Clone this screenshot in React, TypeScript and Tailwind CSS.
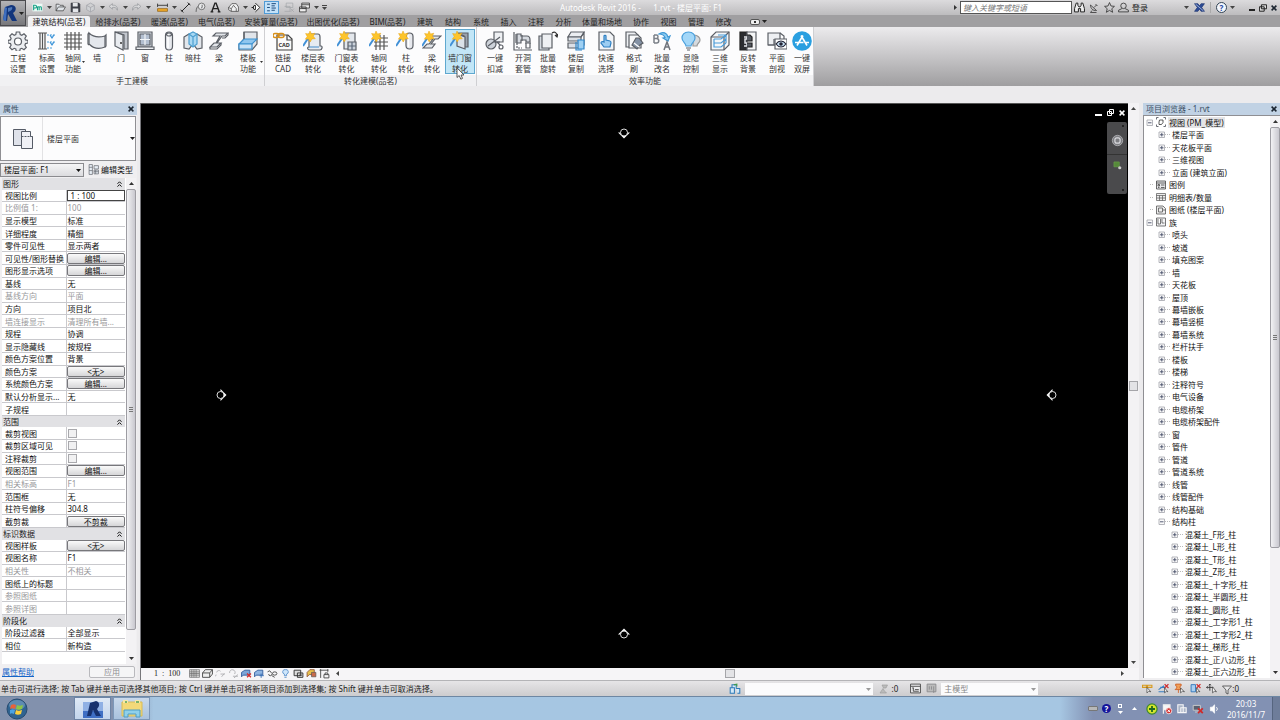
import { useState } from "react";
import type { ReactNode } from "react";
import { clsx } from "clsx";

/* ---------- shared bits ---------- */

function Svg({ size = 20, children }: { size?: number; children: ReactNode }) {
  return (
    <svg
      width={size}
      height={size}
      viewBox="0 0 20 20"
      fill="none"
      stroke="#5b5f66"
      strokeWidth="1.2"
      className="shrink-0"
      aria-hidden="true"
    >
      {children}
    </svg>
  );
}

function Caret({ className = "fill-[#444]" }: { className?: string }) {
  return (
    <svg width="5" height="3" viewBox="0 0 5 3" className={clsx("shrink-0", className)} aria-hidden="true">
      <path d="M0 0h5L2.5 3z" />
    </svg>
  );
}

function Cross({ className = "stroke-[#1b2530]" }: { className?: string }) {
  return (
    <svg width="6" height="6" viewBox="0 0 6 6" strokeWidth="1.5" className={className} aria-hidden="true">
      <path d="M.6.6l4.8 4.8M5.4.6L.6 5.4" />
    </svg>
  );
}

/* yellow star with a blue handle, the "convert" wand */
function Wand() {
  return (
    <g stroke="none">
      <path d="M6 6L0 15" stroke="#3f8fd6" strokeWidth="2" />
      <path
        d="M7 0l1.5 3 3.3-.8-1.5 3 2 2.6-3.3.1L7.200 11 5.600 8l-3.300.2 1.900-2.800L2.600 2.500l3.200.5z"
        fill="#fdc52c"
        stroke="#e9a416"
        strokeWidth=".5"
      />
    </g>
  );
}

/* ---------- ribbon icons ---------- */

const icons: Record<string, ReactNode> = {
  gear: (
    <>
      <path
        d="M8.300 1h3.400l.5 2.500 1.600.7 2.200-1.400 2.300 2.300-1.400 2.200.6 1.600 2.500.5v2.600l-2.500.6-.6 1.600 1.400 2.200-2.300 2.300-2.200-1.400-1.600.6-.5 2.500H8.300l-.5-2.500-1.600-.6L4 18.700l-2.300-2.300 1.400-2.200-.6-1.600L0 12V9.400l2.500-.5.6-1.600-1.400-2.200L4 2.800l2.200 1.400 1.600-.7z"
        fill="#eceef1"
      />
      <circle cx="10" cy="10.500" r="3.500" fill="#fff" />
    </>
  ),
  level: (
    <>
      <path d="M1 2h9M1 18h9M3 2v16M5.500 2v16M8 2v16" stroke="#555" />
      <path d="M10 4h9M10 11h9M10 17h6" stroke="#4b9bd8" strokeDasharray="2 1" />
      <path d="M13 4l2 3 2-3M13 11l2 3 2-3" stroke="#3a92d8" fill="#bfe0f7" />
    </>
  ),
  grid: <path d="M4 1v18M8 1v18M12 1v18M16 1v18M1 4h18M1 8h18M1 12h18M1 16h18" stroke="#555" />,
  wall: (
    <>
      <path d="M2 2c4 4 9 5 16 3v11c-7 3-12 1-16-3z" fill="#e4e7ec" />
      <path d="M2 2L1 3v10l1 1M18 5l1-1v11l-1 1" />
    </>
  ),
  door: (
    <>
      <path d="M4 1h13v17h-4V4L4 1z" fill="#c2c6cd" />
      <path d="M4 1l8 3v15l-8-4z" fill="#e9ecf0" />
      <path d="M10 11v2" stroke="#333" strokeWidth="1.500" />
    </>
  ),
  window: (
    <>
      <path d="M3 1h14v15H3z" fill="#dfe4eb" />
      <path d="M5 3h10v11H5z" fill="#b3bfd0" />
      <path d="M10 3v11M5 8.500h10" stroke="#f2f5f8" />
      <path d="M1 16h18v2.500H1z" fill="#eceef1" />
    </>
  ),
  column: (
    <>
      <rect x="6.500" y="1" width="7" height="18" rx="3.500" fill="#e7e9ee" />
      <path d="M9 3v14" stroke="#fff" strokeWidth="1.500" />
      <ellipse cx="10" cy="3.500" rx="2.500" ry="1.500" />
    </>
  ),
  hiddenColumn: (
    <>
      <path d="M1 6l5-3 4 3 4-3 5 3v11l-5 1-4-5-4 5-5-1z" fill="#e2e6eb" />
      <path d="M6 3l4-2 4 2v10l-4 3-4-3z" fill="#a9d8f3" stroke="#4d9fd0" />
      <path d="M10 6v10M6 3l4 3 4-3" stroke="#4d9fd0" />
    </>
  ),
  beam: (
    <>
      <path d="M7 2h12l-3 3h-3l-5 7h4l-4 4H1l4-4h2l4-7H4z" fill="#e3e6ea" />
      <path d="M1 16v2h7l4-4v-2M19 2v2l-3 3h-3" />
    </>
  ),
  floor: (
    <>
      <path d="M6 1h13v12l-5 6H1v-5l5-6z" fill="#e1e5ea" />
      <path d="M1 13l5-5h13l-5 5z" fill="#8fc6ef" stroke="#3d91cf" />
      <path d="M1 13h13v5H1z" fill="#c8e2f6" stroke="#3d91cf" />
      <path d="M6 1v7" />
    </>
  ),
  cad: (
    <>
      <path d="M4 4h11l4 4v11H4z" fill="#fafafa" stroke="#444" />
      <path d="M14 4v5h5" stroke="#444" />
      <rect x="0" y="2.500" width="6" height="4" rx="2" stroke="#d8901a" strokeWidth="1.500" />
      <rect x="5" y="2.500" width="6" height="4" rx="2" stroke="#d8901a" strokeWidth="1.500" />
      <text x="5.500" y="15.500" fontSize="5.500" fontWeight="700" fill="#333" stroke="none">
        CAD
      </text>
    </>
  ),
  sheetWand: (
    <>
      <path d="M6 3h9c2 0 2 2 2 3v9h1c2 0 1 4-1 4H7c-3 0-3-3-1-3z" fill="#e6ebf1" />
      <path d="M6 16h10" stroke="#5d9bd1" />
      <Wand />
    </>
  ),
  doorWand: (
    <>
      <path d="M7 2h11v16H7z" fill="#e3e7ec" />
      <path d="M11 11h8v8h-8z" fill="#cbd2db" />
      <path d="M15 11v8M11 15h8" stroke="#5e6a7b" />
      <Wand />
    </>
  ),
  gridWand: (
    <>
      <path d="M7 4v15M11 4v15M15 4v15M5 7h14M5 11h14M5 15h14" stroke="#555" />
      <Wand />
    </>
  ),
  columnWand: (
    <>
      <rect x="10" y="2" width="7" height="16" rx="3.500" fill="#e7e9ee" />
      <path d="M12.500 4v12" stroke="#fff" strokeWidth="1.500" />
      <Wand />
    </>
  ),
  beamWand: (
    <>
      <path d="M8 5h11l-3 3h-3l-4 5h4l-3 4H1l4-4h2l4-5H7z" fill="#e3e6ea" />
      <Wand />
    </>
  ),
  wallWand: (
    <>
      <path d="M7 2h11v14h-4V5z" fill="#9ba3ad" />
      <path d="M7 3l8 3v12l-8-3z" fill="#dbe2e8" />
      <Wand />
    </>
  ),
  cut: (
    <>
      <path d="M9 1h9v10H9z" fill="#eef0f3" />
      <circle cx="6" cy="13" r="5" fill="#cdd2d9" />
      <path d="M3 15l12-9M15 11H8M12 11l4 4" />
      <circle cx="16" cy="16" r="2" fill="#fff" />
    </>
  ),
  sleeve: (
    <>
      <path d="M1 1v18h18" />
      <path d="M4 3h4v2h6c2 0 3 2 3 4v2h-4V9H8v3H4z" fill="#d6dae0" />
      <path d="M12 12h6M13 12v5h4v-5M3 3v9M9 4v6" />
      <path d="M4 12v5h5" strokeDasharray="2 1" />
    </>
  ),
  rotate: (
    <>
      <path d="M1 5h10v14H1z" fill="#d5dae0" />
      <path d="M4 3h10v14H4z" fill="#eef0f3" />
      <path d="M14 2c3-2 5 0 5 3M17 4l2 2 1-3" stroke="#333" />
    </>
  ),
  copyFloor: (
    <>
      <path d="M5 1h13l-3 5H2z" fill="#eceef2" />
      <path d="M2 6h13v4H2zM2 12h13v5H2z" fill="#dce0e6" />
      <path d="M15 6l3-4v12l-3 3" />
      <path d="M12 9h6v9h-6z" fill="#9fd0f3" stroke="#2f85c9" />
      <path d="M10 11v8h6" stroke="#2f85c9" />
    </>
  ),
  hand: (
    <>
      <path d="M3 1h11l4 4v14H3z" fill="#f2f4f7" />
      <path
        d="M8 5c0-1 2-1 2 0v4l4 1c1 0 1 1 1 2l-1 4H8l-3-4c0-1 1-2 3-1z"
        fill="#9ccdf2"
        stroke="#2d7fc2"
      />
    </>
  ),
  brush: (
    <>
      <path d="M2 1h9l3 3v12H2z" fill="#eef0f3" />
      <path d="M5 4h9l3 3v10H5z" fill="#f9fafb" />
      <path d="M12 7h3l4 5-3 2-3 4-5-4z" fill="#8492a5" />
      <path d="M10 12l5 4" stroke="#fff" />
    </>
  ),
  rename: (
    <>
      <path d="M2 4v8M2 4h2.500c2 0 2 3.500 0 3.500H2M4.500 7.500c3 0 3 4.500 0 4.500H2" stroke="#7b8088" strokeWidth="1.500" />
      <path d="M7 3c4-3 8-1 9 3l2-1-2 5-5-3 2-.5C12 4 10 3 7 3z" fill="#8fcdf3" stroke="#3f97d4" />
      <path d="M12 19l3-8 3 8M13 16h4" stroke="#6f747c" strokeWidth="1.500" />
    </>
  ),
  bulb: (
    <>
      <path d="M13 4c4 0 6 3 6 5 0 3-3 3-3 6h-4V4z" fill="#d6dade" stroke="#999" />
      <path d="M7.500 1C3 1 1 4 1 7c0 4 4 5 4 8h5c0-3 4-4 4-8 0-3-2-6-6.500-6z" fill="#a3d7f8" stroke="#4ba0dc" />
      <path d="M5 17h5M6 19h3" />
    </>
  ),
  cube: (
    <>
      <path d="M6 1h13v13l-5 5H1V6z" fill="#f4f6f8" />
      <path d="M1 6h13v13M14 6l5-5" />
      <path d="M4 8h7l5-4M4 8v8h7l5-4M4 12h7l5-4M8 4h8v8" fill="none" stroke="#4b9cd8" />
    </>
  ),
  invert: (
    <>
      <path d="M2 1h7v18H2z" fill="#2b2d31" stroke="#222" />
      <path d="M9 1h9v18H9z" fill="#f5f6f7" />
      <path d="M6 6h3v2H7v4h2v3H6" stroke="#e2e4e8" strokeWidth="1.500" />
      <path d="M9 4h3l2 2v4h-5M9 12h5v4H9" fill="#555a62" stroke="#222" />
    </>
  ),
  section: (
    <>
      <path d="M1 2h12v12H1z" fill="#eef0f3" />
      <path d="M1 14h6V8M13 2l4 3v4" />
      <path d="M8 8h12v10H8z" fill="#fff" />
      <path d="M9 13c3-4 7-4 10 0-3 4-7 4-10 0z" fill="#c7e0f2" stroke="#223" />
      <circle cx="14" cy="13" r="1.800" fill="#223" stroke="none" />
    </>
  ),
  store: (
    <>
      <circle cx="10" cy="10" r="9.800" fill="#2a9fe0" stroke="none" />
      <path d="M5 14.500L11 4.500M15 14.500L9 4.500M3 11.500h8.500M14 11.500h3" stroke="#fff" strokeWidth="1.600" />
    </>
  ),
};

/* ---------- quick access bar ---------- */

const quick: { label: string; art?: ReactNode; on?: boolean; gap?: boolean }[] = [
  {
    label: "PM",
    art: (
      <>
        <path d="M1 3h18v14H1z" fill="#eefaf6" stroke="none" />
        <path d="M3 15V6h3c3 0 3 5 0 5H3M10 15V8M10 10c0-2 3-2 3 0v5M13 10c0-2 4-2 4 0v5" stroke="#16a085" strokeWidth="2" />
      </>
    ),
  },
  { label: "" },
  { label: "打开", art: <path d="M2 16V4h5l2 2h6v3M2 16l4-7h13l-4 7z" fill="#dfe3e8" stroke="#333" /> },
  {
    label: "保存",
    art: (
      <>
        <path d="M2 2h14l2 2v14H2z" fill="#3d4048" stroke="#33363c" />
        <path d="M5 2h9v6H5zM5 12h10v6H5z" fill="#e5e7ea" stroke="none" />
      </>
    ),
  },
  { label: "同步", art: <path d="M3 6l7-4 7 4v8l-7 4-7-4zM3 6l7 4 7-4M10 10v8" stroke="#9b9ea3" fill="#cfd1d4" /> },
  { label: "" },
  { label: "放弃", art: <path d="M8 3L2 8l6 5v-3c4-1 7 0 9 5 1-6-3-10-9-9z" stroke="#8f9297" fill="#d8d8da" /> },
  { label: "" },
  { label: "重做", art: <path d="M12 3l6 5-6 5v-3c-4-1-7 0-9 5-1-6 3-10 9-9z" stroke="#8f9297" fill="#d8d8da" /> },
  { label: "" },
  {
    label: "测量",
    gap: true,
    art: (
      <>
        <path d="M1 12h18v5H1z" fill="#efa929" stroke="#8a5a10" />
        <path d="M1 6h18M1 3v6M19 3v6" stroke="#333" strokeWidth="1.600" />
      </>
    ),
  },
  { label: "" },
  {
    label: "对齐标注",
    art: (
      <>
        <path d="M3 17L17 3" stroke="#222" strokeWidth="1.800" />
        <path d="M1 14l5 5M14 1l5 5" stroke="#222" strokeWidth="1.800" />
      </>
    ),
  },
  {
    label: "标记",
    art: (
      <>
        <path d="M2 18c0-6 2-10 5-11" stroke="#333" />
        <circle cx="12" cy="8" r="6" fill="#e8e9eb" stroke="#444" />
        <path d="M11 11l2-1V5" stroke="#333" />
      </>
    ),
  },
  { label: "文字", art: <path d="M3 18L9 2h2l6 16M6 12h8M1 18h5M14 18h5" stroke="#222" strokeWidth="2.600" /> },
  {
    label: "三维视图",
    gap: true,
    art: (
      <>
        <path d="M1 10l6-7h8l4 6v8H6l-5-3z" fill="#f1f1f2" stroke="#333" />
        <path d="M1 10l5 2 4-6 5 6v5M6 12v5" stroke="#333" />
      </>
    ),
  },
  { label: "" },
  { label: "剖面", art: <path d="M1 10h4M8 2l8 8-8 8M8 6a4 4 0 100 8z" fill="#fff" stroke="#222" strokeWidth="1.800" /> },
  {
    label: "细线",
    on: true,
    art: <path d="M2 4h5M2 10h5M2 16h5M10 3h8M10 7h6M10 11h8M10 15h6" stroke="#1e4c7c" strokeWidth="1.800" />,
  },
  {
    label: "关闭隐藏窗口",
    gap: true,
    art: <path d="M4 2h12v8H4zM1 8h10v9H1M12 12l6 6M18 12l-6 6" stroke="#a1a3a7" fill="none" />,
  },
  { label: "切换窗口", art: <path d="M5 2h14v9H5zM5 5h14M1 9h12v9H1zM1 12h12" stroke="#333" fill="#eee" strokeWidth="1.500" /> },
  { label: "" },
];

function QuickAccess() {
  return (
    <div className="flex h-full items-center">
      {quick.map((q, i) =>
        q.art ? (
          <button
            key={i}
            title={q.label}
            className={clsx(
              "flex h-[13px] w-[15px] items-center justify-center",
              q.gap && "ml-[3px]",
              q.on && "border border-[#4f9bd6] bg-[#c3e1f8]"
            )}
          >
            <Svg size={11}>{q.art}</Svg>
          </button>
        ) : (
          <button key={i} aria-label="更多" className="flex w-2 justify-center">
            <Caret />
          </button>
        )
      )}
      <button aria-label="自定义快速访问工具栏" className="flex w-2 flex-col items-center gap-px">
        <span className="h-px w-[5px] bg-[#444]" />
        <Caret />
      </button>
    </div>
  );
}

function TitleBar() {
  return (
    <header className="flex h-[15px] shrink-0 items-center bg-linear-to-b from-[#dcdbdd] to-[#bdbcbe] pl-[30px]">
      <QuickAccess />
      <h1 className="flex-1 text-center whitespace-pre text-white">
        {"Autodesk Revit 2016 -      1.rvt - 楼层平面: F1"}
      </h1>
      <div className="flex h-full items-center">
        <svg width="3" height="5" viewBox="0 0 3 5" aria-hidden="true">
          <path d="M0 0l3 2.500L0 5z" fill="#333" />
        </svg>
        <input
          aria-label="搜索"
          placeholder="键入关键字或短语"
          className="ml-[3px] h-[13px] w-[112px] border border-[#555] bg-white px-[2px] leading-[11px] italic placeholder:text-[#777]"
        />
        <div className="flex items-center gap-[3px] pl-px">
          <button aria-label="查找" className="flex w-3 justify-center">
            <Svg size={11}>
              <path d="M4 2h3v4l2 3h2l2-3V2h3l3 10v6h-7v-6H8v6H1v-6z" fill="#eee" stroke="#222" strokeWidth="1.800" />
            </Svg>
          </button>
          <button aria-label="通讯中心" className="flex w-3 justify-center">
            <Svg size={10}>
              <path d="M3 4c0 7 5 12 12 11zM6 15l-3 4h12M10 9l5-5M13 2l4 4" stroke="#333" strokeWidth="1.600" />
            </Svg>
          </button>
          <button aria-label="收藏夹" className="flex w-3 justify-center">
            <Svg size={11}>
              <path d="M10 1l2.700 6.300 6.300.6-4.800 4.300 1.500 6.500L10 15.300l-5.700 3.400 1.500-6.500L1 7.900l6.300-.6z" stroke="#333" strokeWidth="1.500" />
            </Svg>
          </button>
          <button className="flex items-center gap-[3px] text-[#222]">
            <Svg size={11}>
              <circle cx="10" cy="7" r="5" stroke="#333" strokeWidth="1.500" />
              <path d="M7 12l-6 3v3h18v-3l-6-3" stroke="#333" strokeWidth="1.500" />
            </Svg>
            登录
          </button>
        </div>
        <button aria-label="账户菜单" className="ml-[36px]">
          <Caret />
        </button>
        <button aria-label="Exchange Apps" className="ml-[5px]">
          <Svg size={11}>
            <path d="M1 3h6l3 4 3-4h6l-5 7 5 7h-6l-3-4-3 4H1l5-7z" fill="#2d4b94" stroke="#1f3673" />
            <path d="M3 4l14 12" stroke="#cfdcf4" />
          </Svg>
        </button>
        <span className="mx-[5px] h-[11px] w-px bg-[#aaa]" />
        <button aria-label="帮助" className="flex size-[11px] items-center justify-center rounded-full border border-[#345] bg-[#f3f7fd] font-bold text-[#2447a0]">
          ?
        </button>
        <button aria-label="帮助菜单" className="ml-[3px]">
          <Caret />
        </button>
        <div className="ml-[14px] flex items-center gap-[4px] pr-[3px]">
          <button aria-label="最小化" className="h-[7px] w-[6px] border-b-2 border-[#222]" />
          <button aria-label="还原">
            <Svg size={8}>
              <path d="M6 2h13v10H6zM1 7h12v11H1z" fill="#ddd" stroke="#222" strokeWidth="2.500" />
            </Svg>
          </button>
          <button aria-label="关闭">
            <Cross />
          </button>
        </div>
      </div>
    </header>
  );
}

/* ---------- ribbon ---------- */

const tabs: [string, string][] = [
  ["建筑结构(品茗)", "w-[62px]"],
  ["给排水(品茗)", "w-[56px]"],
  ["暖通(品茗)", "w-[47px]"],
  ["电气(品茗)", "w-[47px]"],
  ["安装算量(品茗)", "w-[62px]"],
  ["出图优化(品茗)", "w-[62px]"],
  ["BIM(品茗)", "w-[47px]"],
  ["建筑", "w-[28px]"],
  ["结构", "w-[28px]"],
  ["系统", "w-[28px]"],
  ["插入", "w-[27px]"],
  ["注释", "w-[28px]"],
  ["分析", "w-[27px]"],
  ["体量和场地", "w-[50px]"],
  ["协作", "w-[28px]"],
  ["视图", "w-[27px]"],
  ["管理", "w-[28px]"],
  ["修改", "w-[27px]"],
];

type Tool = { icon: string; lines: string[]; w: string; more?: boolean; hot?: boolean };

const panels: { title: string; tools: Tool[] }[] = [
  {
    title: "手工建模",
    tools: [
      { icon: "gear", lines: ["工程", "设置"], w: "w-[30px]" },
      { icon: "level", lines: ["标高", "设置"], w: "w-[28px]" },
      { icon: "grid", lines: ["轴网", "功能"], w: "w-[24px]", more: true },
      { icon: "wall", lines: ["墙"], w: "w-[24px]" },
      { icon: "door", lines: ["门"], w: "w-[24px]" },
      { icon: "window", lines: ["窗"], w: "w-[24px]" },
      { icon: "column", lines: ["柱"], w: "w-[24px]" },
      { icon: "hiddenColumn", lines: ["暗柱"], w: "w-[24px]" },
      { icon: "beam", lines: ["梁"], w: "w-[28px]" },
      { icon: "floor", lines: ["楼板", "功能"], w: "w-[30px]", more: true },
    ],
  },
  {
    title: "转化建模(品茗)",
    tools: [
      { icon: "cad", lines: ["链接", "CAD"], w: "w-[30px]" },
      { icon: "sheetWand", lines: ["楼层表", "转化"], w: "w-[30px]" },
      { icon: "doorWand", lines: ["门窗表", "转化"], w: "w-[37px]" },
      { icon: "gridWand", lines: ["轴网", "转化"], w: "w-[28px]" },
      { icon: "columnWand", lines: ["柱", "转化"], w: "w-[26px]" },
      { icon: "beamWand", lines: ["梁", "转化"], w: "w-[26px]" },
      { icon: "wallWand", lines: ["墙门窗", "转化"], w: "w-[30px]", hot: true },
    ],
  },
  {
    title: "效率功能",
    tools: [
      { icon: "cut", lines: ["一键", "扣减"], w: "w-[30px]" },
      { icon: "sleeve", lines: ["开洞", "套管"], w: "w-[26px]" },
      { icon: "rotate", lines: ["批量", "旋转"], w: "w-[24px]" },
      { icon: "copyFloor", lines: ["楼层", "复制"], w: "w-[32px]" },
      { icon: "hand", lines: ["快速", "选择"], w: "w-[28px]" },
      { icon: "brush", lines: ["格式", "刷"], w: "w-[28px]" },
      { icon: "rename", lines: ["批量", "改名"], w: "w-[28px]" },
      { icon: "bulb", lines: ["显隐", "控制"], w: "w-[30px]" },
      { icon: "cube", lines: ["三维", "显示"], w: "w-[28px]" },
      { icon: "invert", lines: ["反转", "背景"], w: "w-[28px]" },
      { icon: "section", lines: ["平面", "剖视"], w: "w-[30px]" },
      { icon: "store", lines: ["一键", "双屏"], w: "w-[20px]" },
    ],
  },
];

function ToolButton({ tool }: { tool: Tool }) {
  return (
    <button
      className={clsx(
        "relative flex h-[45px] flex-col items-center border pt-px leading-[11px] text-[#333] hover:border-[#5fa8cf] hover:bg-[#c2e6f7]",
        tool.w,
        tool.hot ? "border-[#5fa8cf] bg-[#c2e6f7]" : "border-transparent"
      )}
    >
      <Svg>{icons[tool.icon]}</Svg>
      <span className="mt-[1px] whitespace-nowrap">{tool.lines[0]}</span>
      <span className="whitespace-nowrap">{tool.lines[1]}</span>
      {tool.more && (
        <span className="absolute right-[-1px] bottom-[10px]">
          <svg width="3" height="2" viewBox="0 0 3 2" aria-hidden="true">
            <path d="M0 0h3L1.500 2z" fill="#333" />
          </svg>
        </span>
      )}
      {tool.hot && (
        <svg width="9" height="13" viewBox="0 0 9 13" className="absolute top-[37px] left-[10px] z-10" aria-hidden="true">
          <path d="M1 .8v9.700l2.200-2 1.600 3.700 1.700-.8L5 8h3z" fill="#fff" stroke="#333" strokeWidth=".8" />
        </svg>
      )}
    </button>
  );
}

function Ribbon() {
  const [active, setActive] = useState(0);
  return (
    <>
      <nav className="flex h-3 shrink-0 items-end bg-[#a09fa1] pl-[28px]">
        {tabs.map(([name, w], i) => (
          <button
            key={name}
            onClick={() => setActive(i)}
            className={clsx(
              "h-[11px] text-center leading-[11px] whitespace-nowrap text-[#222]",
              w,
              i === active && "rounded-t-[2px] bg-[#f1f1f3]"
            )}
          >
            {name}
          </button>
        ))}
        <button aria-label="最小化功能区" className="ml-[13px] flex h-[11px] items-center gap-[2px]">
          <span className="flex h-[6px] w-[10px] items-center justify-center rounded-[2px] border border-[#555] bg-[#eee]">
            <span className="size-[2px] bg-[#333]" />
          </span>
          <Caret className="fill-[#222]" />
        </button>
      </nav>
      <section className="flex h-[59px] shrink-0 bg-linear-to-b from-[#ecebed] via-[#c6c5c7] to-[#9f9ea0]">
        {panels.map((p) => (
          <div key={p.title} className="flex flex-col border-r border-[#cfcfd2] bg-[#fcfcfd]">
            <div className="flex h-[48px] items-start pt-[2px] pr-px pl-[3px]">
              {p.tools.map((t) => (
                <ToolButton key={t.icon} tool={t} />
              ))}
            </div>
            <h2 className="flex-1 bg-[#f1f1f3] text-center leading-[11px] text-[#333]">{p.title}</h2>
          </div>
        ))}
      </section>
    </>
  );
}

/* ---------- properties palette ---------- */

type Row =
  | { kind: "head"; name: string }
  | { kind: "text" | "dim" | "button" | "check" | "input"; name: string; value?: string };

const rows: Row[] = [
  { kind: "head", name: "图形" },
  { kind: "input", name: "视图比例", value: "1 : 100" },
  { kind: "dim", name: "比例值 1:", value: "100" },
  { kind: "text", name: "显示模型", value: "标准" },
  { kind: "text", name: "详细程度", value: "精细" },
  { kind: "text", name: "零件可见性", value: "显示两者" },
  { kind: "button", name: "可见性/图形替换", value: "编辑..." },
  { kind: "button", name: "图形显示选项", value: "编辑..." },
  { kind: "text", name: "基线", value: "无" },
  { kind: "dim", name: "基线方向", value: "平面" },
  { kind: "text", name: "方向", value: "项目北" },
  { kind: "dim", name: "墙连接显示", value: "清理所有墙..." },
  { kind: "text", name: "规程", value: "协调" },
  { kind: "text", name: "显示隐藏线", value: "按规程" },
  { kind: "text", name: "颜色方案位置", value: "背景" },
  { kind: "button", name: "颜色方案", value: "<无>" },
  { kind: "button", name: "系统颜色方案", value: "编辑..." },
  { kind: "text", name: "默认分析显示...", value: "无" },
  { kind: "text", name: "子规程" },
  { kind: "head", name: "范围" },
  { kind: "check", name: "裁剪视图" },
  { kind: "check", name: "裁剪区域可见" },
  { kind: "check", name: "注释裁剪" },
  { kind: "button", name: "视图范围", value: "编辑..." },
  { kind: "dim", name: "相关标高", value: "F1" },
  { kind: "text", name: "范围框", value: "无" },
  { kind: "text", name: "柱符号偏移", value: "304.8" },
  { kind: "button", name: "截剪裁", value: "不剪裁" },
  { kind: "head", name: "标识数据" },
  { kind: "button", name: "视图样板", value: "<无>" },
  { kind: "text", name: "视图名称", value: "F1" },
  { kind: "dim", name: "相关性", value: "不相关" },
  { kind: "text", name: "图纸上的标题" },
  { kind: "dim", name: "参照图纸" },
  { kind: "dim", name: "参照详图" },
  { kind: "head", name: "阶段化" },
  { kind: "text", name: "阶段过滤器", value: "全部显示" },
  { kind: "text", name: "相位", value: "新构造" },
];

function RowValue({ row }: { row: Row }) {
  if (row.kind === "head") return null;
  if (row.kind === "button")
    return (
      <button
        aria-label={`${row.name} ${row.value}`}
        className="block h-[11px] w-full rounded-[2px] border border-[#77777b] bg-linear-to-b from-[#fafafa] to-[#d6d6d8] text-center leading-[9px] text-[#111]"
      >
        {row.value}
      </button>
    );
  if (row.kind === "check")
    return (
      <input
        type="checkbox"
        aria-label={row.name}
        className="ml-px block size-[9px] appearance-none border border-[#a9a9ad] bg-[#f1f1f2] checked:bg-[#4b8bd0]"
      />
    );
  if (row.kind === "input")
    return (
      <input
        aria-label={row.name}
        defaultValue={row.value}
        className="block h-[11px] w-full border border-[#444] bg-white px-[3px] leading-[9px]"
      />
    );
  return <span className="pl-px">{row.value}</span>;
}

function VScroll({ thumb, grip }: { thumb: string; grip?: boolean }) {
  return (
    <div className="flex w-[10px] shrink-0 flex-col items-center bg-[#f3f2f4]">
      <div className="flex h-[11px] shrink-0 items-center">
        <Caret className="rotate-180 fill-[#333]" />
      </div>
      <div className="min-h-0 w-full flex-1">
        <div
          className={clsx(
            "flex w-full flex-col items-center justify-center gap-px rounded-[2px] border border-[#9d9ca2] bg-linear-to-r from-[#f2f2f4] to-[#c9c8cf]",
            thumb
          )}
        >
          {grip && (
            <>
              <span className="h-px w-1 bg-[#777]" />
              <span className="h-px w-1 bg-[#777]" />
              <span className="h-px w-1 bg-[#777]" />
            </>
          )}
        </div>
      </div>
      <div className="flex h-[11px] shrink-0 items-center">
        <Caret className="fill-[#333]" />
      </div>
    </div>
  );
}

function PaletteTitle({ children }: { children: ReactNode }) {
  return (
    <div className="flex h-3 shrink-0 items-center justify-between bg-[#c1d2e4] px-[3px] text-[#3c5064]">
      <h2>{children}</h2>
      <button aria-label="关闭面板">
        <Cross />
      </button>
    </div>
  );
}

function Properties() {
  return (
    <aside className="flex w-[137px] shrink-0 flex-col bg-[#f0eff1]">
      <PaletteTitle>属性</PaletteTitle>
      <button className="mt-px mr-px flex h-[45px] shrink-0 items-center border border-[#8f8f93] bg-[#fcfcfd] text-[#333]">
        <span className="flex h-full w-[42px] items-center justify-center border-r border-[#e2e2e4] pl-[3px]">
          <svg width="20" height="20" viewBox="0 0 20 20" fill="#dfe2ea" stroke="#555b66" aria-hidden="true">
            <path d="M.5.5h12v16H.5z" />
            <path d="M8.500 2.500h9v5h2v12h-11z" fill="#f0f1f6" />
            <path d="M8.500 7.500h11" strokeDasharray="2 1" />
          </svg>
        </span>
        <span className="flex-1 pl-[4px] text-left">楼层平面</span>
        <Caret className="fill-[#222]" />
      </button>
      <div className="flex h-[17px] shrink-0 items-center gap-[4px]">
        <div className="relative w-[84px]">
          <select
            aria-label="实例筛选"
            className="block h-[14px] w-full appearance-none border border-[#8b8b8f] bg-linear-to-b from-[#f5f5f6] to-[#dcdcdf] px-[3px] leading-3 text-[#111]"
          >
            <option>楼层平面: F1</option>
          </select>
          <span className="pointer-events-none absolute top-[6px] right-[3px]">
            <Caret className="fill-[#111]" />
          </span>
        </div>
        <button className="flex items-center gap-[2px] whitespace-nowrap text-[#111]">
          <Svg size={11}>
            <path d="M2 1h6v18H2zM2 6h6M2 12h6M11 3h8v6h-8zM11 11h8v7h-8zM14 11v7M11 14h8" fill="#e8eef5" />
          </Svg>
          编辑类型
        </button>
      </div>
      <div className="flex min-h-0 flex-1 pr-px pl-[2px]">
        <div className="min-h-0 flex-1 bg-white pr-px pb-3">
          <table className="h-full w-full table-fixed border-collapse leading-[11px]">
            <colgroup>
              <col className="w-[64px]" />
              <col />
            </colgroup>
            <tbody>
              {rows.map((row) =>
                row.kind === "head" ? (
                  <tr key={row.name} className="bg-[#e1e1e4]">
                    <th colSpan={2} className="p-0 text-left font-normal text-[#222]">
                      <button className="flex w-full items-center justify-between pr-[3px] pl-px leading-[11px]">
                        {row.name}
                        <svg width="5" height="6" viewBox="0 0 5 6" fill="none" stroke="#111" aria-hidden="true">
                          <path d="M.5 2.800L2.500.8l2 2M.5 5.600l2-2 2 2" />
                        </svg>
                      </button>
                    </th>
                  </tr>
                ) : (
                  <tr key={row.name} className={clsx("border-b border-[#c9c9cd]", row.kind === "dim" ? "text-[#98989b]" : "text-[#111]")}>
                    <td className="border-r border-[#c9c9cd] py-0 pr-0 pl-[3px] whitespace-nowrap">{row.name}</td>
                    <td className="p-0 whitespace-nowrap">
                      <RowValue row={row} />
                    </td>
                  </tr>
                )
              )}
            </tbody>
          </table>
        </div>
        <VScroll thumb="h-[95%]" grip />
      </div>
      <div className="flex h-4 shrink-0 items-center justify-between pr-[2px] pl-[2px]">
        <a href="#help" className="text-[#1565c8] underline">
          属性帮助
        </a>
        <button disabled className="h-3 w-[46px] rounded-[2px] border border-[#b9b9bd] bg-[#f5f5f6] leading-[10px] text-[#8e8e92]">
          应用
        </button>
      </div>
    </aside>
  );
}

/* ---------- drawing area ---------- */

function Marker({ place, turn }: { place: string; turn: string }) {
  return (
    <svg
      width="12"
      height="12"
      viewBox="0 0 12 12"
      className={clsx("absolute -translate-x-1/2 -translate-y-1/2", place, turn)}
      aria-hidden="true"
    >
      <path d="M0 5.500h12L6 11.500z" fill="#fff" />
      <circle cx="6" cy="5.500" r="3.500" fill="#000" stroke="#ddd" />
    </svg>
  );
}

const viewTools: { label: string; art: ReactNode }[] = [
  {
    label: "详细程度",
    art: <path d="M1 3h18v14H1zM1 7h18M1 10h18M1 13h18M5 3v14M9 3v14M13 3v14" stroke="#666" fill="#ddd" />,
  },
  { label: "视觉样式", art: <path d="M6 3h13v8l-5 6H1V9zM1 9h13v8M14 9l5-6" stroke="#444" strokeWidth="1.600" fill="#eee" /> },
  { label: "日光路径", art: <path d="M3 8a4 4 0 017-2M2 12l-1 3M10 11h8M12 16l5-6" stroke="#b3b3b6" strokeWidth="1.800" /> },
  { label: "阴影", art: <path d="M3 9a5 5 0 119 2M9 15h9M11 18l7-6" stroke="#b3b3b6" strokeWidth="1.800" /> },
  {
    label: "裁剪视图",
    art: (
      <>
        <path d="M1 8l6-4h9v9H4l-3 3z" fill="#7ba5d8" stroke="#2d5a9c" strokeWidth="1.600" />
        <path d="M11 10l7 7M18 10l-7 7" stroke="#d22f2f" strokeWidth="2.500" />
      </>
    ),
  },
  {
    label: "显示裁剪区域",
    art: (
      <>
        <path d="M1 8l6-4h9v9H4l-3 3z" fill="#8fb5e2" stroke="#2d5a9c" strokeWidth="1.600" />
        <path d="M13 10v8M10 14h8" stroke="#3a6fb5" strokeWidth="1.600" />
      </>
    ),
  },
  { label: "临时隐藏", art: <path d="M1 7l4-2 4 5M3 11a3 3 0 106 0M10 10a4 3 0 108 0 4 3 0 10-8 0M9 14l5 3" stroke="#444" strokeWidth="1.600" /> },
  { label: "显示隐藏图元", art: <path d="M10 3a4 4 0 00-2 8v3h4v-3a4 4 0 00-2-8zM8 17h4" fill="#cfe6fb" stroke="#4a86c6" strokeWidth="1.400" /> },
  { label: "临时视图属性", art: <path d="M2 4h12v10H2zM8 9h10v8H8zM11 13h5" stroke="#333" strokeWidth="1.700" fill="#ddd" /> },
  {
    label: "分析模型",
    art: (
      <>
        <path d="M2 8l5-5h8v9H6l-4 4z" fill="#e6c04a" stroke="#8a4c2d" strokeWidth="1.500" />
        <path d="M10 8h8v8h-8z" fill="#c96a4a" stroke="#555" />
      </>
    ),
  },
  { label: "约束", art: <path d="M3 2v16M1 4h16M16 2v5M9 12h9v6H9zM11 12V9h5v3" stroke="#444" strokeWidth="1.600" /> },
];

function Canvas() {
  return (
    <main className="flex min-w-0 flex-1 flex-col border-l border-[#77777b]">
      <div className="flex min-h-0 flex-1">
        <div className="relative flex-1 border-t border-[#555] bg-black">
          <Marker place="top-[5.2%] left-[48.9%]" turn="rotate-0" />
          <Marker place="top-[51.6%] left-[8.1%]" turn="-rotate-90" />
          <Marker place="top-[51.6%] left-[92.3%]" turn="rotate-90" />
          <Marker place="top-[94%] left-[48.9%]" turn="rotate-180" />
          <div className="absolute top-[5px] right-[3px] flex items-center gap-[5px]">
            <button aria-label="最小化视图" className="h-[7px] w-[7px] border-b-2 border-white" />
            <button aria-label="还原视图">
              <svg width="7" height="7" viewBox="0 0 7 7" fill="#000" stroke="#fff" aria-hidden="true">
                <path d="M2.500.5h4v4h-4zM.5 2.500h4v4h-4z" />
              </svg>
            </button>
            <button aria-label="关闭视图">
              <Cross className="stroke-white" />
            </button>
          </div>
          <div className="absolute top-[18px] right-px flex h-[72px] w-5 flex-col items-center justify-between rounded-[2px] bg-[#4a4a4c] py-[3px]">
            <span className="mr-[3px] size-[2px] self-end bg-[#222]" />
            <button aria-label="导航控制盘">
              <Svg size={13}>
                <circle cx="10" cy="10" r="8" fill="#7d7e82" stroke="#b5b6ba" />
                <rect x="6" y="6" width="8" height="8" rx="3" stroke="#dcdce0" strokeWidth="1.800" />
              </Svg>
            </button>
            <span className="h-px w-full bg-[#333]" />
            <button aria-label="缩放" className="mb-[12px]">
              <Svg size={9}>
                <path d="M2 2h12v11H2z" fill="#568a3a" stroke="#6ea54d" />
                <circle cx="15" cy="15" r="3.500" fill="#ccc" stroke="none" />
              </Svg>
            </button>
            <span className="mr-[3px] size-[2px] self-end bg-[#222]" />
          </div>
        </div>
        <div className="flex w-[11px] shrink-0 flex-col items-center justify-between bg-[#f3f2f4] py-1">
          <Caret className="rotate-180 fill-[#444]" />
          <div className="h-[10px] w-[9px] border border-[#a5a5a9] bg-[#e3e3e6]" />
          <Caret className="fill-[#444]" />
        </div>
      </div>
      <div className="flex h-3 shrink-0 items-center bg-[#f6f5f7] pb-px">
        <span className="pr-[8px] pl-[13px] font-['Liberation_Serif','Noto_Sans_CJK_SC',serif] whitespace-pre text-[#222]">
          {"1  :  100"}
        </span>
        {viewTools.map((t) => (
          <button key={t.label} title={t.label} className="flex w-[13px] justify-center">
            <Svg size={11}>{t.art}</Svg>
          </button>
        ))}
        <div className="flex flex-1 items-center justify-between pr-[15px] pl-[5px]">
          <svg width="3" height="5" viewBox="0 0 3 5" aria-hidden="true">
            <path d="M3 0L0 2.500 3 5z" fill="#444" />
          </svg>
          <div className="h-[9px] w-[10px] border border-[#a5a5a9] bg-[#e3e3e6]" />
          <svg width="3" height="5" viewBox="0 0 3 5" aria-hidden="true">
            <path d="M0 0l3 2.500L0 5z" fill="#444" />
          </svg>
        </div>
      </div>
    </main>
  );
}

/* ---------- project browser ---------- */

type Node = { name: string; depth: 0 | 1 | 2; open?: boolean; icon?: "view" | "legend" | "table" | "sheet" | "family"; leaf?: boolean };

const families = [
  "喷头", "坡道", "填充图案", "墙", "天花板", "屋顶", "幕墙嵌板", "幕墙竖梃", "幕墙系统", "栏杆扶手", "楼板", "楼梯",
  "注释符号", "电气设备", "电缆桥架", "电缆桥架配件", "窗", "管件", "管道", "管道系统", "线管", "线管配件", "结构基础",
];

const columns = ["F形", "L形", "T形", "Z形", "十字形", "半圆形", "圆形", "工字形1", "工字形2", "梯形", "正八边形", "正六边形"];

const tree: Node[] = [
  { name: "视图 (PM_模型)", depth: 0, open: true, icon: "view" },
  { name: "楼层平面", depth: 1 },
  { name: "天花板平面", depth: 1 },
  { name: "三维视图", depth: 1 },
  { name: "立面 (建筑立面)", depth: 1 },
  { name: "图例", depth: 0, leaf: true, icon: "legend" },
  { name: "明细表/数量", depth: 0, leaf: true, icon: "table" },
  { name: "图纸 (楼层平面)", depth: 0, leaf: true, icon: "sheet" },
  { name: "族", depth: 0, open: true, icon: "family" },
  ...families.map((name): Node => ({ name, depth: 1 })),
  { name: "结构柱", depth: 1, open: true },
  ...columns.map((c): Node => ({ name: `混凝土_${c}_柱`, depth: 2 })),
];

const treeIcons = {
  view: (
    <>
      <path d="M1 5V1h4M15 1h4v4M19 15v4h-4M5 19H1v-4" strokeWidth="1.800" />
      <path d="M7 6h7v5l-3 4H6v-5z" stroke="#333" strokeWidth="1.600" />
    </>
  ),
  legend: <path d="M1 2h18v16H1zM1 6h18M4 9h3v3H4zM10 10h7M4 15h3M10 15h7" fill="#e8e8ea" stroke="#444" strokeWidth="1.600" />,
  table: <path d="M1 3h18v14H1zM1 7h18M1 12h18M7 7v10M13 7v10" fill="#eee" stroke="#555" strokeWidth="1.400" />,
  sheet: <path d="M1 2h13l5 5v11H1zM5 6h8v8H5zM13 10h6" fill="#eee" stroke="#555" strokeWidth="1.600" />,
  family: <path d="M1 2h18v16H1zM4 4v10h5V4M12 4v8h5" fill="#f4f4f6" stroke="#555" strokeWidth="1.600" />,
};

function TreeRow({ node, selected, onSelect }: { node: Node; selected: boolean; onSelect: () => void }) {
  return (
    <li
      className={clsx(
        "flex min-h-[12px] flex-1 items-center leading-3 whitespace-nowrap",
        node.depth === 0 && "pl-[2px]",
        node.depth === 1 && "pl-[14px]",
        node.depth === 2 && "pl-[27px]"
      )}
    >
      {node.leaf ? (
        <span className="ml-[4px] w-[3px] border-t border-dotted border-[#bbb]" />
      ) : (
        <button aria-label={`${node.open ? "折叠" : "展开"} ${node.name}`} className="size-[7px]">
          <svg width="7" height="7" viewBox="0 0 7 7" fill="#fafafa" stroke="#a2a3ab" aria-hidden="true">
            <path d="M1 1h5.500v5.500H1z" strokeWidth=".8" />
            <path d={node.open ? "M2 3.800h3.500" : "M2 3.800h3.500M3.800 2v3.500"} stroke="#444c66" strokeWidth=".9" />
          </svg>
        </button>
      )}
      {node.icon ? (
        <span className="mr-[2px] ml-[3px]">
          <Svg size={10}>{treeIcons[node.icon]}</Svg>
        </span>
      ) : (
        <span className="mr-px w-[5px] border-t border-dotted border-[#bbb]" />
      )}
      <button onClick={onSelect} className={clsx("h-[11px] px-px leading-[11px] text-[#111]", selected && "bg-[#e4e4e6]")}>
        {node.name}
      </button>
    </li>
  );
}

function Browser() {
  const [selected, setSelected] = useState(0);
  return (
    <aside className="ml-[4px] flex w-[137px] shrink-0 flex-col bg-[#f0eff1] pb-[2px]">
      <PaletteTitle>项目浏览器 - 1.rvt</PaletteTitle>
      <div className="flex min-h-0 flex-1 border-t border-l border-[#8f8f93]">
        <ul className="flex flex-1 flex-col overflow-hidden bg-white">
          {tree.map((node, i) => (
            <TreeRow key={node.name + i} node={node} selected={i === selected} onSelect={() => setSelected(i)} />
          ))}
        </ul>
        <VScroll thumb="h-[78%]" grip />
      </div>
    </aside>
  );
}

/* ---------- status bar ---------- */

const selectTools: { label: string; art: ReactNode }[] = [
  {
    label: "选择链接",
    art: (
      <>
        <path d="M1 4h7v4H1zM10 4h8v4h-8z" stroke="#d79a1e" strokeWidth="2" />
        <path d="M9 8v10l3-3 4 1z" fill="#fff" stroke="#333" />
      </>
    ),
  },
  {
    label: "选择基线图元",
    art: (
      <>
        <path d="M1 16h13M1 12l10-7M4 8h9" stroke="#3a80c4" strokeWidth="2" />
        <path d="M12 2l7 7M19 2l-7 7" stroke="#d02a2a" strokeWidth="2.200" />
        <path d="M12 9v9l3-3 3 1z" fill="#fff" stroke="#333" />
      </>
    ),
  },
  {
    label: "选择锁定图元",
    art: (
      <>
        <path d="M3 2h10v3l-2 1v3l3 3H2l3-3V6L3 5zM8 12v6" fill="#f0a05a" stroke="#cc5a1e" strokeWidth="1.500" />
        <path d="M12 9v9l3-3 4 1z" fill="#fff" stroke="#333" />
      </>
    ),
  },
  {
    label: "按面选择",
    art: (
      <>
        <path d="M2 3h8v13H2z" fill="#a9cff0" stroke="#2b72b8" strokeWidth="1.600" />
        <path d="M12 2l7 7M19 2l-7 7" stroke="#d02a2a" strokeWidth="2.200" />
        <path d="M12 9v9l3-3 3 1z" fill="#fff" stroke="#333" />
      </>
    ),
  },
  {
    label: "选择时拖曳",
    art: (
      <>
        <path d="M7 2v12M1 8h12M7 2L5 4M7 2l2 2M1 8l2-2M1 8l2 2" stroke="#333" strokeWidth="1.600" />
        <path d="M12 7v11l3-3 4 1z" fill="#fff" stroke="#333" />
      </>
    ),
  },
];

function FlatSelect({ label, value, w }: { label: string; value: string; w: string }) {
  return (
    <div className={clsx("relative", w)}>
      <select aria-label={label} className="block h-3 w-full appearance-none bg-[#fbfbfc] px-[3px] leading-3 text-[#888]">
        <option>{value}</option>
      </select>
      <span className="pointer-events-none absolute top-[5px] right-[2px]">
        <Caret className="fill-[#999]" />
      </span>
    </div>
  );
}

function StatusBar() {
  return (
    <footer className="flex h-4 shrink-0 items-center border-t border-[#b4b4b7] bg-linear-to-b from-[#e6e5e7] to-[#cdccce] text-[#222]">
      <p className="min-w-0 flex-1 truncate pl-px">
        单击可进行选择; 按 Tab 键并单击可选择其他项目; 按 Ctrl 键并单击可将新项目添加到选择集; 按 Shift 键并单击可取消选择。
      </p>
      <div className="flex shrink-0 items-center">
        <button aria-label="工作集" className="mr-[4px]">
          <Svg size={12}>
            <path d="M2 8h7v9H2zM5 8V3h7v6M12 9h6v8h-4" fill="#d4e9f8" stroke="#2b79b8" strokeWidth="1.700" />
            <path d="M8 3l5-1v4" stroke="#3f9b4d" strokeWidth="2" />
          </Svg>
        </button>
        <FlatSelect label="活动工作集" value="" w="w-[128px]" />
        <span className="ml-[6px] flex items-center gap-[3px]">
          <Svg size={10}>
            <path d="M6 2h11l-3 6H9zM2 18l6-9 3 5 4 4z" fill="#bbb" stroke="#999" />
          </Svg>
          :0
        </span>
        <button aria-label="设计选项" className="ml-[12px]">
          <Svg size={11}>
            <path d="M1 2h18v16H1zM1 6h18M4 9h3M9 12h7M9 15h7M6 9v6h3" fill="#ececee" stroke="#444" strokeWidth="1.600" />
          </Svg>
        </button>
        <button aria-label="拾取选项" className="mr-[4px] ml-[5px]">
          <Svg size={11}>
            <path d="M2 2h16v14H2zM6 6v6M10 6v6M14 6v12" fill="#bbb" stroke="#8a8a8d" strokeWidth="1.600" />
          </Svg>
        </button>
        <FlatSelect label="设计选项集" value="主模型" w="w-[97px]" />
      </div>
      <div className="ml-[104px] flex shrink-0 items-center gap-[5px] pr-[41px]">
        {selectTools.map((t) => (
          <button key={t.label} title={t.label}>
            <Svg size={11}>{t.art}</Svg>
          </button>
        ))}
        <button className="flex items-end">
          <Svg size={10}>
            <path d="M1 2h18l-7 8v8l-4-2v-6z" fill="#e8e8ea" stroke="#444" strokeWidth="1.600" />
          </Svg>
          :0
        </button>
      </div>
    </footer>
  );
}

/* ---------- taskbar ---------- */

function Taskbar() {
  return (
    <div className="flex h-6 shrink-0 items-center border-t border-[#6d87a3] bg-linear-to-r from-[#8291ad] from-10% via-[#a6c6e2] via-12% to-[#a6c6e2]">
      <button aria-label="开始" className="ml-[6px] size-[22px]">
        <svg width="22" height="22" viewBox="0 0 22 22" aria-hidden="true">
          <circle cx="11" cy="11" r="10" fill="#2f6390" stroke="#274b70" />
          <ellipse cx="11" cy="7" rx="8" ry="5" fill="#7fa6c8" opacity=".6" />
          <path d="M5 7c2-1 3-1 5 0l-1 4c-2-1-3-1-5 0z" fill="#e8623a" />
          <path d="M11 7c2 1 3 1 6 0l-1 4c-2 1-4 1-6 0z" fill="#8cc544" />
          <path d="M4 12c2-1 3-1 5 0l-1 4c-2-1-3-1-4 0z" fill="#4aa3e4" />
          <path d="M10 12c2 1 3 1 6 0l-1 4c-2 1-4 1-6 0z" fill="#fbd03c" />
        </svg>
      </button>
      <button
        aria-label="Autodesk Revit"
        className="ml-[46px] flex h-[23px] w-[37px] items-center justify-center border border-[#6d84a6] bg-linear-to-b from-[#dfe9f6] to-[#c3d5ec]"
      >
        <svg width="20" height="19" viewBox="0 0 20 19" aria-hidden="true">
          <path d="M0 3h20v16H0z" fill="#8fb0e4" />
          <path d="M0 12h20v7H0z" fill="#3f6fc4" />
          <path d="M4 17L7 4l6-2c4 1 4 5 1 8l4 7h-5l-3-6-2 6z" fill="#17326e" />
        </svg>
      </button>
      <button
        aria-label="资源管理器"
        className="ml-[2px] flex h-[23px] w-[37px] items-center justify-center border border-[#7c97b8] bg-linear-to-b from-[#c9d9eb] to-[#a9c2de]"
      >
        <svg width="22" height="19" viewBox="0 0 22 19" aria-hidden="true">
          <path d="M1 3h20v14H1z" fill="#f3d979" stroke="#d9bb55" />
          <path d="M2 1h5v3H2zM14 1h5v3h-5z" fill="#f6e7a8" />
          <path d="M4 2h2v2H4zM15 2h3v2h-3z" fill="#7cb26b" />
          <path d="M3 11h16v7h-4v-3H7v3H3z" fill="#8fd0ea" stroke="#4f9cc4" />
        </svg>
      </button>
      <div className="flex-1" />
      <div className="flex h-full items-center bg-linear-to-r from-[#a6c6e2] to-[#8291b3] to-15% pl-[28px]">
        <div className="flex items-center gap-[3px]">
          <span className="mr-[1px] h-[5px] w-[10px] rounded-[1px] border border-[#777] bg-[#b8b8b8]" />
          <button aria-label="帮助" className="flex size-[9px] items-center justify-center rounded-full bg-[#14149a] font-bold text-white">
            ?
          </button>
          <span className="mx-[3px] flex w-[6px] flex-col items-center gap-[3px]">
            <span className="size-[4px] border border-white" />
            <Caret className="fill-white" />
          </span>
          <button aria-label="显示隐藏的图标" className="mx-[3px]">
            <Caret className="rotate-180 fill-white" />
          </button>
          <span className="ml-[3px]">
            <Svg size={12}>
              <circle cx="10" cy="10" r="8.500" fill="#d6e62c" stroke="#3d8a2c" strokeWidth="2" />
              <path d="M10 5v10M5 10h10" stroke="#1f6a1f" strokeWidth="3" />
            </Svg>
          </span>
          <Svg size={12}>
            <path d="M4 2v16M4 3h11v8H4" fill="#f5f5f7" stroke="#eee" strokeWidth="2" />
            <circle cx="13" cy="13" r="5" fill="#d33030" stroke="#fff" />
            <path d="M11 11l4 4M15 11l-4 4" stroke="#fff" strokeWidth="1.600" />
          </Svg>
          <Svg size={12}>
            <path d="M3 3h9v13H3zM8 8h9v8H8z" fill="#aab4c6" stroke="#f6f6f8" strokeWidth="1.800" />
          </Svg>
          <span className="ml-[1px]">
            <Svg size={12}>
              <path d="M2 4h12v8H2zM5 15h8" fill="#5a6070" stroke="#ccc" strokeWidth="1.600" />
              <path d="M10 9l8 8M18 9l-8 8" stroke="#d02a2a" strokeWidth="3" />
            </Svg>
          </span>
          <span className="ml-[1px]">
            <Svg size={12}>
              <path d="M4 7h3l4-4v14l-4-4H4z" fill="#fff" stroke="#fff" />
              <path d="M14 7c2 2 2 4 0 6" stroke="#fff" strokeWidth="1.600" />
            </Svg>
          </span>
        </div>
        <time className="mx-[7px] text-center leading-[11px] text-white">
          20:03
          <br />
          2016/11/7
        </time>
        <button aria-label="显示桌面" className="h-full w-2 border-l border-[#56657f] bg-[#6e7d9a]" />
      </div>
    </div>
  );
}

export default function App() {
  return (
    <div
      lang="zh-CN"
      className="relative flex h-screen min-h-[640px] w-full flex-col overflow-hidden bg-[#ecebed] font-['Noto_Sans','Noto_Sans_CJK_SC',sans-serif] text-[8px] leading-3"
    >
      <TitleBar />
      <Ribbon />
      <button
        aria-label="应用程序菜单"
        className="absolute top-0 left-0 flex h-[26px] w-[26px] items-center justify-center gap-px border border-[#4a4a4e] bg-linear-to-b from-[#b4b4b7] to-[#77777b]"
      >
        <svg width="16" height="18" viewBox="0 0 16 18" aria-hidden="true">
          <path d="M1 16L3 3l6-2c6 0 6 6 2 8l4 8h-5L6 10l-1 7z" fill="#12357c" />
          <path d="M6 4l4-1c1 2-1 4-4 5z" fill="#4f78b8" />
          <path d="M1 16L3 3l2 1-1 13z" fill="#3f6fc0" />
        </svg>
        <Caret className="fill-[#222]" />
      </button>
      <div className="h-[17px] shrink-0" />
      <div className="flex min-h-0 flex-1">
        <Properties />
        <div className="w-[3px] shrink-0" />
        <Canvas />
        <Browser />
      </div>
      <StatusBar />
      <Taskbar />
    </div>
  );
}
